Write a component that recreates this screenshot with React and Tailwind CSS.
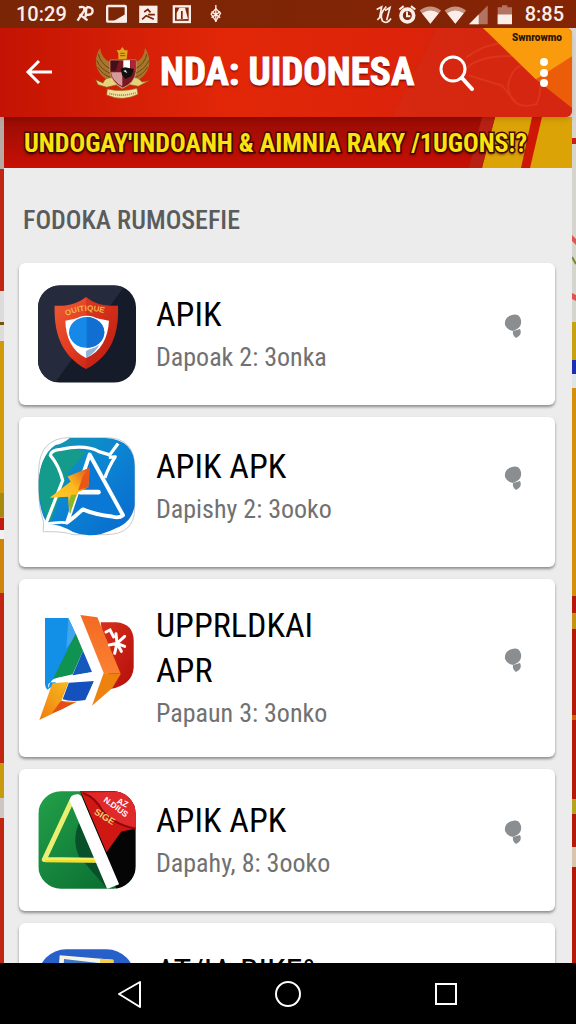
const apps = [
  { id: 1, title: "APIK", info: "Dapoak 2: 3onka", Icon: ShieldIcon, pad: "items-center py-[22px]" },
  { id: 2, title: "APIK APK", info: "Dapishy 2: 3ooko", Icon: StarIcon, pad: "items-center pt-5 pb-8" },
  { id: 3, title: "UPPRLDKAI APR", info: "Papaun 3: 3onko", Icon: ArrowIcon, pad: "items-center py-6" },
  { id: 4, title: "APIK APK", info: "Dapahy, 8: 3ooko", Icon: TriangleIcon, pad: "items-center py-[22px]" },
  { id: 5, title: "AT/IA BIKE°", Icon: PhotoIcon, pad: "items-start py-[26px]" },
];

function ShieldIcon() {
  return (
    <svg viewBox="114 342 294 292" className="h-[98px] w-[98px] shrink-0" aria-hidden="true">
      <defs>
        <clipPath id="shieldClip"><rect x="114" y="342" width="294" height="292" rx="66" /></clipPath>
        <linearGradient id="shieldRed" x1="0" y1="0" x2="1" y2="1">
          <stop offset="0" stopColor="#ee5a35" />
          <stop offset="0.5" stopColor="#e23a20" />
          <stop offset="1" stopColor="#b51a10" />
        </linearGradient>
      </defs>
      <g clipPath="url(#shieldClip)">
        <rect x="114" y="342" width="294" height="292" fill="#161b2a" />
        <path d="M114 342H375L165 634H114Z" fill="#252b3c" />
        <path d="M258 377C282 398 318 406 354 403C357 480 338 552 258 593C182 552 161 480 164 403C202 406 234 397 258 377Z" fill="url(#shieldRed)" />
        <path d="M258 377C282 398 318 406 354 403C357 480 338 552 258 593Z" fill="#b91b12" opacity=".35" />
        <path d="M196 448Q260 430 327 448C324 500 303 540 258 560C218 540 197 500 196 448Z" fill="#fff" />
        <path d="M258 539L300 518Q284 547 258 560Z" fill="#8eb4d8" />
        <ellipse cx="260" cy="483" rx="55" ry="48" fill="#1689e8" stroke="#fff" strokeWidth="4" />
        <path d="M260 437A53 46 0 0 1 260 529Z" fill="#116fd2" />
        <path id="shieldArc" d="M199 434Q260 405 325 430" fill="none" />
        <text fill="#f0b24a" fontSize="24" fontWeight="700" fontFamily="Liberation Sans, sans-serif">
          <textPath href="#shieldArc">OUITIQUE</textPath>
        </text>
      </g>
    </svg>
  );
}

function StarIcon() {
  return (
    <svg viewBox="53 82 300 302" className="h-[98px] w-[98px] shrink-0 overflow-visible" aria-hidden="true">
      <defs>
        <linearGradient id="starBlue" x1="0" y1="0" x2="1" y2="1">
          <stop offset="0" stopColor="#1698a8" />
          <stop offset="0.45" stopColor="#0c86d2" />
          <stop offset="1" stopColor="#0868cf" />
        </linearGradient>
        <linearGradient id="starBolt" x1="0" y1="1" x2="1" y2="0">
          <stop offset="0" stopColor="#ffd52b" />
          <stop offset="0.6" stopColor="#fbb91e" />
          <stop offset="1" stopColor="#e34b14" />
        </linearGradient>
      </defs>
      <path d="M54 190Q54 84 150 84H260Q350 84 350 174V300Q350 383 260 383H160Q130 372 68 374L69 345Q54 300 54 255Z" fill="#fff" stroke="#c6c9cc" strokeWidth="3" />
      <path d="M150 85H260Q350 90 350 174V292Q342 345 292 363Q220 400 160 375Q120 350 80 350Q54 305 54 245Q54 140 106 107Q128 103 150 85Z" fill="url(#starBlue)" />
      <path d="M90 127Q145 108 200 130L145 190L90 350Q54 300 54 215Q60 150 90 127Z" fill="#149b8b" />
      <path d="M75 352L128 216Q118 172 90 138Q92 122 122 120Q198 104 240 127L273 137L299 102M270 145L290 143Q271 171 258 208" fill="none" stroke="#fff" strokeWidth="10" strokeLinejoin="round" />
      <path d="M142 345L211 136L314 323Q301 334 280 327Q228 321 190 305Q167 327 142 345Z" fill="#0a78d5" stroke="#fff" strokeWidth="12" strokeLinejoin="round" />
      <path d="M75 351Q120 342 143 347" fill="none" stroke="#fff" strokeWidth="9" />
      <path d="M183 252H238" fill="none" stroke="#fff" strokeWidth="15" strokeLinecap="round" />
      <path d="M212 176L207 237L176 252L148 319L145 266L88 269L153 219L143 204Z" fill="url(#starBolt)" />
      <path d="M211 178L207 237L176 246L190 203Z" fill="#ea5619" />
      <path d="M170 260L151 320L146 282L155 260Z" fill="#8bb824" />
    </svg>
  );
}

function ArrowIcon() {
  return (
    <svg viewBox="54 114 294 324" className="h-[108px] w-[98px] shrink-0" aria-hidden="true">
      <defs>
        <linearGradient id="arrowOrange" x1="0" y1="0" x2="0" y2="1">
          <stop offset="0" stopColor="#f26a21" />
          <stop offset="1" stopColor="#fb8032" />
        </linearGradient>
        <linearGradient id="arrowTip" x1="1" y1="0" x2="0" y2="1">
          <stop offset="0" stopColor="#f5c21f" />
          <stop offset="1" stopColor="#f27c10" />
        </linearGradient>
        <linearGradient id="arrowRed" x1="0" y1="0" x2="1" y2="1">
          <stop offset="0" stopColor="#d9301c" />
          <stop offset="1" stopColor="#b30f0b" />
        </linearGradient>
      </defs>
      <path d="M242 139H288Q341 143 341 195V275Q337 327 270 339Z" fill="url(#arrowRed)" />
      <path d="M75 126H145L170 180L105 325L82 341Q75 335 75 324Z" fill="#128fe6" />
      <path d="M145 126L170 178L139 217Z" fill="#3fa5ee" />
      <path d="M168 170L190 222L158 295L99 309Z" fill="#109350" />
      <path d="M190 222L224 287L157 299Z" fill="#1559bd" />
      <path d="M148 316L222 315L196 372Q154 379 128 370Z" fill="#1551bd" />
      <path d="M146 122H182L258 291L213 390L195 386L222 315L147 320L92 319Q81 324 86 336Q90 309 110 306L216 288Z" fill="#fff" />
      <path d="M181 117L232 124L302 293L251 291Z" fill="url(#arrowOrange)" />
      <path d="M251 291L302 294L277 336L216 389Z" fill="#ee820f" />
      <path d="M97 322L145 318L123 374L170 378L58 432Z" fill="url(#arrowTip)" />
      <path d="M123 374Q148 384 171 376L126 400L96 412Z" fill="#e54c18" />
      <path d="M145 318L124 374L101 390Z" fill="#f2a316" />
      <path d="M291 202L288 173M291 202L314 181M291 202L314 211M291 202L284 232M291 202L268 207M291 202L304 226M258 168L270 162L281 183" fill="none" stroke="#fff" strokeWidth="9" strokeLinecap="round" />
    </svg>
  );
}

function TriangleIcon() {
  return (
    <svg viewBox="54 72 294 296" className="h-[98px] w-[98px] shrink-0" aria-hidden="true">
      <defs>
        <clipPath id="triClip"><rect x="54" y="73" width="294" height="294" rx="68" /></clipPath>
        <linearGradient id="triGreen" x1="0" y1="0" x2="1" y2="1">
          <stop offset="0" stopColor="#23a14a" />
          <stop offset="1" stopColor="#07662d" />
        </linearGradient>
      </defs>
      <g clipPath="url(#triClip)">
        <rect x="54" y="72" width="294" height="296" fill="url(#triGreen)" />
        <path d="M178 165Q154 220 177 270L262 367L230 270Z" fill="#07502a" />
        <path d="M180 72H348V368H290Z" fill="#050505" />
        <path d="M181 72H348V186L305 194L260 257Z" fill="#cf1714" />
        <path d="M188 78Q225 90 248 132Q280 172 348 186V72Z" fill="#e0292b" />
        <path d="M188 78Q225 90 248 132Q280 172 348 186" fill="none" stroke="#8d0909" strokeWidth="6" />
        <path d="M155 101L72 279L232 281" fill="none" stroke="#e9ef72" strokeWidth="15" strokeLinejoin="round" />
        <path d="M75 284H235" stroke="#f6dc22" strokeWidth="7" />
        <path d="M148 100Q151 80 176 82Q185 86 188 96L298 354L262 368Z" fill="#fff" />
        <g fontFamily="Liberation Sans, sans-serif" fontWeight="700" fill="#fff">
          <text transform="translate(289 108) rotate(25)" fontSize="26">AZ</text>
          <text transform="translate(249 102) rotate(36)" fontSize="25">N.DIUS</text>
          <text transform="translate(221 140) rotate(32)" fontSize="28" fill="#f1d073">SIGE</text>
        </g>
      </g>
    </svg>
  );
}

function PhotoIcon() {
  return (
    <svg viewBox="54 110 294 294" className="h-[98px] w-[98px] shrink-0" aria-hidden="true">
      <rect x="54" y="111" width="290" height="290" rx="84" fill="#2860ca" />
      <path d="M119 129L280 142L286 300L108 290Z" fill="#f7f4e6" />
      <path d="M240 139L280 142L284 200H240Z" fill="#f2d24d" />
      <path d="M132 140L252 154V290H124Z" fill="#3d78c0" />
    </svg>
  );
}

function Garuda() {
  return (
    <svg viewBox="282 132 174 160" className="h-[54px] w-[58px] shrink-0" aria-hidden="true">
      <path d="M300 137C278 172 286 214 325 234L347 230L332 180Q305 171 300 137Z" fill="#a8762a" />
      <path d="M435 137C458 172 451 214 412 234L391 230L406 180Q432 171 435 137Z" fill="#a8762a" />
      <path d="M295 155Q302 185 330 199M290 174Q303 202 331 213M293 194Q309 218 332 225M441 155Q434 185 407 199M447 174Q434 202 406 213M443 194Q428 218 406 225" fill="none" stroke="#6e4517" strokeWidth="3" />
      <path d="M355 170V153L350 143L360 144L367 134L374 144L383 144L380 170Z" fill="#e3a521" />
      <path d="M361 153H374M360 160H376" stroke="#8d5812" strokeWidth="3" />
      <path d="M342 227Q316 222 309 242L287 232L294 247L320 255L349 248L366 259L389 247L415 252L447 235L426 239Q411 220 393 228Z" fill="#e9d07a" stroke="#84611f" strokeWidth="2" />
      <path d="M330 173H408V208Q404 242 368 257Q334 240 330 208Z" fill="#7b1622" stroke="#d8b27d" strokeWidth="2" />
      <path d="M370 174H390V202H370Z" fill="#fff" />
      <path d="M391 174H407V206H391Z" fill="#ad2538" />
      <path d="M333 210H367V252Q337 238 333 210Z" fill="#d79a9c" />
      <path d="M332 175H357L347 205H332Z" fill="#43101a" />
      <path d="M362 199L375 195L402 200L394 222L376 230L366 218Z" fill="#111" />
      <path d="M370 206L377 203L382 213Z" fill="#e4e6eb" />
      <path d="M322 260Q366 270 411 258L414 276Q367 299 320 278Z" fill="#f1e1a1" stroke="#8d681f" strokeWidth="2" />
      <path d="M328 273Q367 285 407 271" fill="none" stroke="#a58337" strokeWidth="5" strokeDasharray="3 3" />
    </svg>
  );
}

function StatusBar() {
  return (
    <div className="flex h-7 shrink-0 items-center justify-between bg-linear-to-r from-[#7a2606] to-[#842405] pr-3 pl-4 text-xl leading-7 font-medium text-[#fbeee8]">
      <div className="flex items-center gap-[9px]">
        <span>10:29</span>
        <svg viewBox="228 8 440 60" className="h-5 w-[147px]" fill="none" stroke="#fbeee8" strokeWidth="7" aria-hidden="true">
          <path d="M236 18Q256 12 252 28L232 58M238 39L262 57M259 17Q282 17 276 35Q270 43 257 39M259 17L256 48" />
          <rect x="321" y="14" width="56" height="47" rx="3" />
          <path d="M346 60H377V42Z" fill="#fbeee8" />
          <rect x="417" y="13" width="55" height="52" fill="#fbeee8" stroke="none" />
          <path d="M426 54L438 43L461 54M432 32L443 24L451 33M444 40H464" stroke="#762508" strokeWidth="5" />
          <rect x="521" y="15" width="48" height="47" />
          <path d="M533 51V36L540 23H552L559 50Z" fill="#fbeee8" />
          <path d="M545 29V53" stroke="#762508" strokeWidth="5" />
          <path d="M647 11V62M634 31L660 49M660 31L634 49" strokeWidth="4" />
          <path d="M647 22L661 36L647 59L633 38Z" strokeWidth="4" />
        </svg>
      </div>
      <div className="flex items-center gap-3">
        <svg viewBox="256 6 414 62" className="h-[21px] w-[138px]" fill="#fbeee8" aria-hidden="true">
          <path d="M261 22L276 14L270 46L263 53M290 13Q268 35 278 56Q292 68 304 49M286 25L301 16L291 54" fill="none" stroke="#fbeee8" strokeWidth="5" />
          <circle cx="353" cy="40" r="19" fill="none" stroke="#fbeee8" strokeWidth="11" />
          <path d="M329 22L342 12M364 12L377 22M352 28V42H362" fill="none" stroke="#fbeee8" strokeWidth="6" />
          <path d="M390 25Q422 1 454 25L422 65Z" opacity=".55" />
          <path d="M397 33Q422 17 447 33L422 65Z" />
          <path d="M465 25Q497 1 529 25L497 65Z" opacity=".55" />
          <path d="M472 33Q497 17 522 33L497 65Z" />
          <path d="M538 66L594 10V66Z" opacity=".4" />
          <path d="M538 66L567 37V66Z" />
          <path d="M624 15H637V9H653V15H667V66H624Z" opacity=".4" />
          <path d="M624 37H667V66H624Z" />
        </svg>
        <span>8:85</span>
      </div>
    </div>
  );
}

function Header() {
  return (
    <header className="relative z-10 mr-1 flex h-[89px] shrink-0 items-center overflow-hidden rounded-r-md bg-linear-to-r from-[#c41304] via-[#e22708] via-40% to-[#d6200c] pr-3 pl-6 shadow-md">
      <svg viewBox="0 0 200 88" preserveAspectRatio="none" className="absolute top-0 right-0 h-full w-[200px]" aria-hidden="true">
        <path d="M20 88L65 0H200V88Z" fill="#d12b15" opacity=".5" />
        <path d="M94 29Q125 7 155 19Q176 42 165 75Q139 83 136 57Q141 31 163 37M92 42Q110 22 165 30M97 47L130 57L145 75" fill="none" stroke="#f06438" strokeWidth="2" opacity=".25" />
        <path d="M111 0H200V75Z" fill="#f58b08" />
        <path d="M111 0L164 51L200 28V0Z" fill="#fa9b0d" />
        <path d="M164 51L200 28V79Z" fill="#ec5d0a" />
      </svg>
      <button type="button" aria-label="Back" className="relative">
        <svg viewBox="0 0 30 30" className="h-[30px] w-[30px]" fill="none" stroke="#fff" strokeWidth="3">
          <path d="M28 14H4M15 3L4 14L15 25" />
        </svg>
      </button>
      <div className="relative ml-10 flex items-center gap-2">
        <Garuda />
        <h1 className="font-['Roboto_Condensed',Roboto,sans-serif] text-[39px] leading-none font-bold whitespace-nowrap text-white text-shadow-[0_2px_2px_#7a0c00] [-webkit-text-stroke:1px_#fff]">NDA: UIDONESA</h1>
      </div>
      <button type="button" aria-label="Search" className="relative ml-6 shrink-0">
        <svg viewBox="0 0 36 36" className="h-9 w-9" fill="none" stroke="#fff" strokeWidth="3">
          <circle cx="15" cy="14" r="12" />
          <path d="M24 23L34 34" strokeWidth="4" strokeLinecap="round" />
        </svg>
      </button>
      <span className="absolute top-1 right-[10px] text-[10px] leading-3 font-black text-[#2b1600]">Swnrowmo</span>
      <button type="button" aria-label="More options" className="relative ml-auto shrink-0">
        <svg viewBox="0 0 32 32" className="h-8 w-8" fill="#fff">
          <circle cx="16" cy="5" r="4" />
          <circle cx="16" cy="16" r="4" />
          <circle cx="16" cy="26" r="4" />
        </svg>
      </button>
    </header>
  );
}

function Banner() {
  return (
    <div className="relative flex h-[51px] shrink-0 items-center overflow-hidden bg-linear-to-b from-[#980c04] to-[#c90f05] px-5">
      <svg viewBox="0 0 120 51" className="absolute top-0 right-0 h-full w-[120px]" aria-hidden="true">
        <path d="M30 51L43 0H120V51Z" fill="#dca307" />
        <path d="M69 51L80 0H90L78 51Z" fill="#cf1706" />
        <path d="M17 51L30 0H43L30 51Z" fill="#b82014" />
      </svg>
      <p className="relative font-['Roboto_Condensed',Roboto,sans-serif] text-[26px] leading-8 font-bold whitespace-nowrap text-[#fbe30f] [paint-order:stroke_fill] [-webkit-text-stroke:3px_#4a0a02] text-shadow-[0_2px_3px_#3a0500]">
        UNDOGAY'INDOANH &amp; AIMNIA RAKY /1UGONS!?
      </p>
    </div>
  );
}

function AppCard({ app }) {
  const { Icon } = app;
  return (
    <li className={`flex shrink-0 rounded-md bg-white pr-[30px] pl-[19px] shadow-[0_2px_3px_rgba(0,0,0,0.4)] ${app.pad}`}>
      <Icon />
      <div className="ml-5 min-w-0 flex-1">
        <h3 className="max-w-[200px] font-['Roboto_Condensed',Roboto,sans-serif] text-[34px] leading-[45px] text-black">{app.title}</h3>
        {app.info && <p className="font-['Roboto_Condensed',Roboto,sans-serif] text-[26px] leading-10 text-[#717171]">{app.info}</p>}
      </div>
      <button type="button" aria-label={`Options for ${app.title}`} className="shrink-0 self-center pb-4">
        <svg viewBox="0 0 24 24" className="h-6 w-6" fill="#8b8e90">
          <path d="M11 1Q18 -1 20 6Q21 12 16 15L12 17Q6 16 4 11Q3 3 11 1Z" />
          <path d="M12 17L19 15Q21 19 18 22L15 24Q11 21 12 17Z" />
        </svg>
      </button>
    </li>
  );
}

function LeftEdge() {
  return (
    <svg viewBox="0 0 4 846" preserveAspectRatio="none" className="h-full w-1 shrink-0" aria-hidden="true">
      <rect width="4" height="846" fill="#c22612" />
      <rect width="4" height="52" fill="#b9a9a4" />
      <rect y="174" width="4" height="50" fill="#dddcda" />
      <rect y="205" width="4" height="3" fill="#76540b" />
      <rect y="224" width="4" height="177" fill="#d29a0b" />
      <rect y="376" width="4" height="24" fill="#a88910" />
      <rect y="401" width="4" height="12" fill="#c31a10" />
      <rect y="413" width="4" height="9" fill="#f4eeee" />
      <rect y="422" width="4" height="54" fill="#cf8508" />
      <rect y="646" width="4" height="35" fill="#c99b0c" />
      <rect y="681" width="4" height="20" fill="#cec6c2" />
    </svg>
  );
}

function RightEdge() {
  return (
    <svg viewBox="0 0 4 846" preserveAspectRatio="none" className="h-full w-1 shrink-0" aria-hidden="true">
      <rect width="4" height="846" fill="#b51808" />
      <rect width="4" height="205" fill="#d6d5cd" />
      <rect y="21" width="4" height="6" fill="#c91d18" />
      <path d="M0 118L4 122V128L0 124ZM0 176L4 178V184L0 182Z" fill="#e05352" />
      <path d="M0 140L4 147" stroke="#7c8733" strokeWidth="2" />
      <rect y="205" width="4" height="38" fill="#c7a312" />
      <rect y="243" width="4" height="14" fill="#1c2fb3" />
      <rect y="257" width="4" height="14" fill="#dfe4e7" />
      <rect y="271" width="4" height="208" fill="#d3900b" />
      <rect y="496" width="4" height="16" fill="#c99213" />
      <rect y="598" width="4" height="5" fill="#d0660c" />
      <rect y="682" width="4" height="15" fill="#b6a51c" />
      <rect y="730" width="4" height="20" fill="#d8c5ae" />
    </svg>
  );
}

function NavBar() {
  return (
    <nav className="flex h-[61px] shrink-0 items-center justify-center gap-[126px] bg-black">
      <button type="button" aria-label="Back">
        <svg viewBox="0 0 32 32" className="h-8 w-8" fill="none" stroke="#fff" strokeWidth="2" strokeLinejoin="round">
          <path d="M26 4V29L5 16Z" />
        </svg>
      </button>
      <button type="button" aria-label="Home">
        <svg viewBox="0 0 32 32" className="h-8 w-8" fill="none" stroke="#fff" strokeWidth="2">
          <circle cx="16" cy="16" r="12" />
        </svg>
      </button>
      <button type="button" aria-label="Recent apps">
        <svg viewBox="0 0 32 32" className="h-8 w-8" fill="none" stroke="#fff" strokeWidth="2">
          <rect x="6" y="6" width="20" height="20" />
        </svg>
      </button>
    </nav>
  );
}

function App() {
  return (
    <div className="flex h-screen flex-col overflow-hidden bg-[#d8d4d0] font-[Roboto,sans-serif]">
      <StatusBar />
      <Header />
      <div className="flex min-h-0 flex-1">
        <LeftEdge />
        <main className="flex min-w-0 flex-1 flex-col overflow-hidden bg-[#ececec]">
          <Banner />
          <h2 className="px-[19px] pt-9 pb-[27px] font-['Roboto_Condensed',Roboto,sans-serif] text-[26px] leading-8 font-medium text-[#5a5b5c]">FODOKA RUMOSEFIE</h2>
          <ul className="flex flex-col gap-3 pr-[17px] pl-[15px]">
            {apps.map((app) => (
              <AppCard key={app.id} app={app} />
            ))}
          </ul>
        </main>
        <RightEdge />
      </div>
      <NavBar />
    </div>
  );
}

export default App;
